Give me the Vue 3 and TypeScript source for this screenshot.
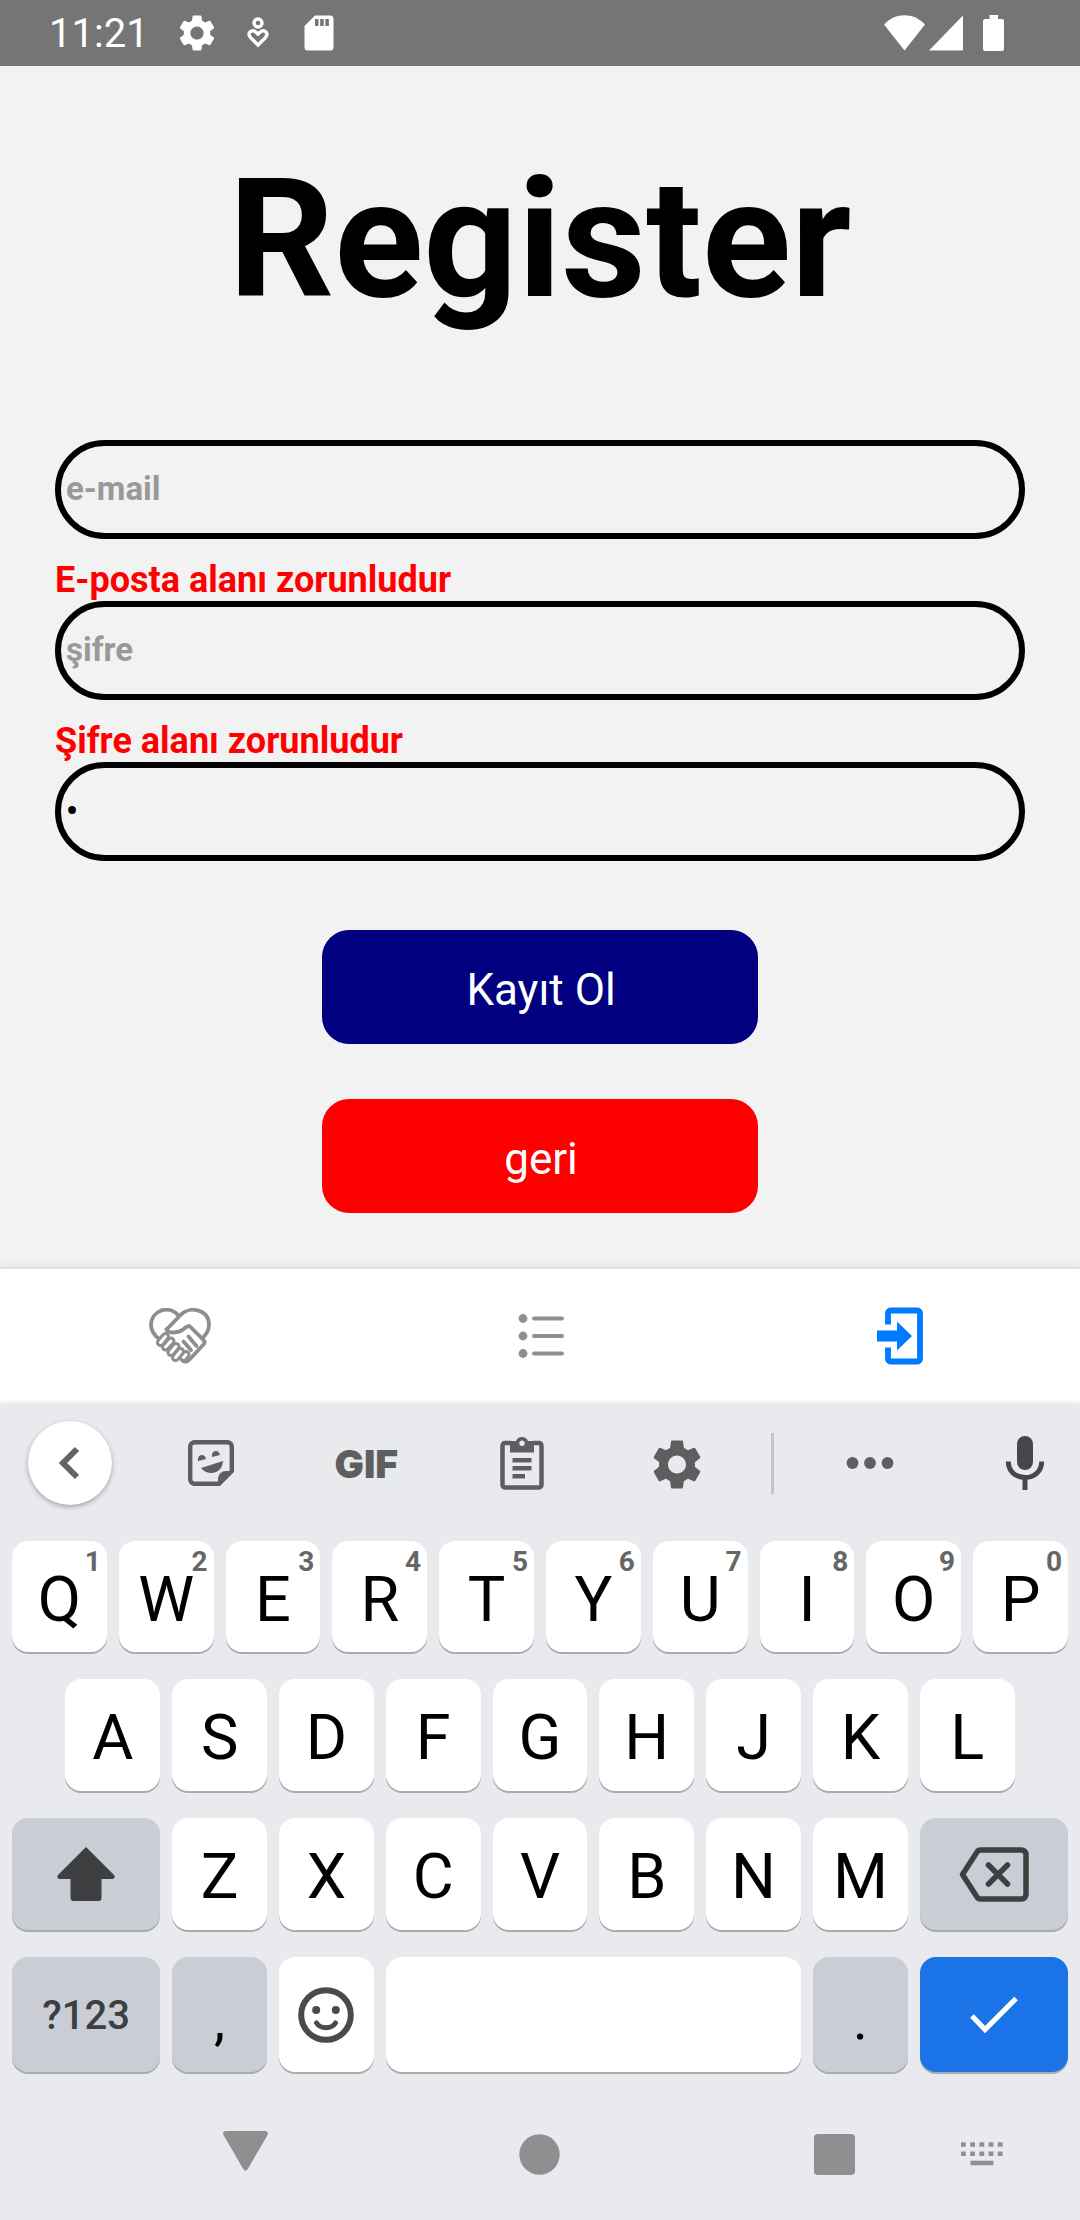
<script setup lang="ts">
import { ref } from 'vue'

interface Key {
  label: string
  hint?: string
}

const email = ref('')
const password = ref('')
const passwordAgain = ref('1')

const topRow: Key[] = [...'QWERTYUIOP'].map((label, i) => ({
  label,
  hint: String((i + 1) % 10),
}))
const homeRow: Key[] = [...'ASDFGHJKL'].map((label) => ({ label }))
const bottomRow: Key[] = [...'ZXCVBNM'].map((label) => ({ label }))

const gearPath =
  'M19.14 12.94c.04-.3.06-.61.06-.94 0-.32-.02-.64-.07-.94l2.03-1.58c.18-.14.23-.41.12-.61l-1.92-3.32c-.12-.22-.37-.29-.59-.22l-2.39.96c-.5-.38-1.03-.7-1.62-.94l-.36-2.54c-.04-.24-.24-.41-.48-.41h-3.84c-.24 0-.43.17-.47.41l-.36 2.54c-.59.24-1.13.57-1.62.94l-2.39-.96c-.22-.08-.47 0-.59.22L2.74 8.87c-.12.21-.08.47.12.61l2.03 1.58c-.05.3-.09.63-.09.94s.02.64.07.94l-2.03 1.58c-.18.14-.23.41-.12.61l1.92 3.32c.12.22.37.29.59.22l2.39-.96c.5.38 1.03.7 1.62.94l.36 2.54c.05.24.24.41.48.41h3.84c.24 0 .44-.17.47-.41l.36-2.54c.59-.24 1.13-.56 1.62-.94l2.39.96c.22.08.47 0 .59-.22l1.92-3.32c.12-.22.07-.47-.12-.61l-2.01-1.58zM12 15.6c-1.98 0-3.6-1.62-3.6-3.6s1.62-3.6 3.6-3.6 3.6 1.62 3.6 3.6-1.62 3.6-3.6 3.6z'
</script>

<template>
  <div class="phone">
    <header class="status">
      <span class="time">11:21</span>
      <div class="status-left">
        <svg width="44" height="44" viewBox="0 0 24 24" fill="currentColor"><path :d="gearPath" /></svg>
        <svg width="44" height="44" viewBox="0 0 44 44" fill="none" stroke="currentColor" stroke-width="3.4">
          <circle cx="22" cy="12" r="4" />
          <path d="M22 34 L14.6 26.6 C10.6 22 16 17.6 20 21.2 L22 23.2 L24 21.2 C28 17.6 33.4 22 29.4 26.6 Z" />
        </svg>
        <svg width="44" height="44" viewBox="0 0 44 44" fill="currentColor" fill-rule="evenodd">
          <path d="M18 4.500h15a3.500 3.500 0 0 1 3.500 3.500v28a3.500 3.500 0 0 1-3.500 3.500h-22a3.500 3.500 0 0 1-3.500-3.500V15zM18 8v7h3.500V8zM23.200 8v7h3.500V8zM28.400 8v7h3.500V8z" />
        </svg>
      </div>
      <div class="status-right">
        <svg width="41" height="36" viewBox="0 0 41 36" fill="currentColor"><path d="M20.500 35.500 0 9.500C11-3 30-3 41 9.500z" /></svg>
        <svg width="34" height="36" viewBox="0 0 34 36" fill="currentColor"><path d="M34 .500V35.500H0z" /></svg>
        <svg width="37" height="36" viewBox="0 0 37 36" fill="currentColor">
          <path d="M22.500 0h8.500v4h4a2 2 0 0 1 2 2v28a2 2 0 0 1-2 2H18a2 2 0 0 1-2-2V6a2 2 0 0 1 2-2h4.500z" />
        </svg>
      </div>
    </header>

    <main class="screen">
      <h1>Register</h1>
      <form @submit.prevent>
        <input v-model="email" class="field" type="email" placeholder="e-mail" aria-label="e-mail" aria-describedby="email-error" />
        <p id="email-error" class="error">E-posta alanı zorunludur</p>
        <input v-model="password" class="field" type="password" placeholder="şifre" aria-label="şifre" aria-describedby="password-error" />
        <p id="password-error" class="error">Şifre alanı zorunludur</p>
        <input v-model="passwordAgain" class="field" type="password" aria-label="şifre tekrar" />
        <div class="actions">
          <button class="action submit" type="submit">Kayıt Ol</button>
          <button class="action back" type="button">geri</button>
        </div>
      </form>
    </main>

    <nav class="tabs">
      <a href="#help" aria-label="Yardım">
        <svg width="62" height="56" viewBox="0 0 62 56" fill="none" stroke="currentColor" stroke-width="3.800" stroke-linecap="round" stroke-linejoin="round">
          <path d="M29.500 7.500C19-4 2 3 2 17c0 5 3 10 8 14" />
          <path d="M17.500 21.500 32 6.500C41-2 60 1 60 17c0 5-2.500 9-6 12.500" />
          <path d="M17.500 21.500c2 4.500 12 3.500 16.500 0 2.500-2 4-3.500 6.500-3.500l14 14c1.500 1.500 1.500 3 0 4.500L41 51c-2 3-5 3.500-7.500 1.500" />
          <g stroke-width="9">
            <path d="M16.500 28.500 11.500 34.500" /><path d="M22 33 16.500 39" /><path d="M27 38.500 22 44.500" /><path d="M31.500 43.500 26.500 49.500" /><path d="M37 46.500 34.500 49.500" />
          </g>
          <g stroke="#fff" stroke-width="3">
            <path d="M16.500 28.500 11.500 34.500" /><path d="M22 33 16.500 39" /><path d="M27 38.500 22 44.500" /><path d="M31.500 43.500 26.500 49.500" /><path d="M37 46.500 34.500 49.500" />
          </g>
          <path d="M34.500 33.500 42 42M39.500 28.500 47.500 38" />
        </svg>
      </a>
      <a href="#list" aria-label="Liste">
        <svg width="48" height="44" viewBox="0 0 48 44" fill="currentColor">
          <circle cx="7" cy="4.500" r="4.400" /><circle cx="7" cy="22" r="4.400" /><circle cx="7" cy="39.500" r="4.400" />
          <path d="M18 4.500h28M18 22h28M18 39.500h28" stroke="currentColor" stroke-width="4" stroke-linecap="round" />
        </svg>
      </a>
      <a href="#login" class="active" aria-label="Giriş">
        <svg width="46" height="58" viewBox="0 0 46 58" fill="currentColor">
          <path d="M11 17.500V6A2.500 2.500 0 0 1 13.500 3.500H40.500A2.500 2.500 0 0 1 43 6V52A2.500 2.500 0 0 1 40.500 54.500H13.500A2.500 2.500 0 0 1 11 52V40.500" fill="none" stroke="currentColor" stroke-width="5.800" />
          <path d="M0 23.500H20V14.500L35 29 20 43.500V34.500H0z" />
        </svg>
      </a>
    </nav>

    <section class="keyboard">
      <div class="tools">
        <button class="tool collapse" type="button" aria-label="Geri">
          <svg width="84" height="84" viewBox="0 0 84 84" fill="none" stroke="#636466" stroke-width="6"><path d="M49 28 35 42 49 56" /></svg>
        </button>
        <div class="tool-group">
          <button class="tool" type="button" aria-label="Çıkartma">
            <svg width="46" height="46" viewBox="0 0 46 46" fill="currentColor">
              <path d="M31 43.800H6.500A4.300 4.300 0 0 1 2.200 39.500V6.500A4.300 4.300 0 0 1 6.500 2.200h33A4.300 4.300 0 0 1 43.800 6.500V31z" fill="none" stroke="currentColor" stroke-width="4.400" />
              <path d="M30 45V39a8 8 0 0 1 8-8h7L32 45z" />
              <path d="M13 28 35 21C34 35 19 36 13 28zM10 21c-1-7 7-8 8-2zM24 17c-1-7 7-8 8-2z" />
            </svg>
          </button>
          <button class="tool gif" type="button">GIF</button>
          <button class="tool" type="button" aria-label="Pano">
            <svg width="44" height="54" viewBox="0 0 44 54" fill="currentColor">
              <path d="M11 7H5A3 3 0 0 0 2.500 10V49A2.500 2.500 0 0 0 5 51.500H39A2.500 2.500 0 0 0 41.500 49V10A3 3 0 0 0 39 7H33" fill="none" stroke="currentColor" stroke-width="4.500" />
              <path fill-rule="evenodd" d="M10 5h6a6.500 6.500 0 0 1 12 0h6v11.500H10zM22 4.500a2.700 2.700 0 1 0 0 5.400 2.700 2.700 0 0 0 0-5.400z" />
              <path d="M12.500 22h19v4.500h-19zM12.500 30h19v4.500h-19zM12.500 38H25v4.500H12.500z" />
            </svg>
          </button>
          <button class="tool" type="button" aria-label="Ayarlar">
            <svg width="60" height="60" viewBox="0 -0.6 24 24" fill="currentColor"><path :d="gearPath" /></svg>
          </button>
        </div>
        <span class="divider"></span>
        <button class="tool more" type="button" aria-label="Diğer">
          <svg width="48" height="14" viewBox="0 0 48 14" fill="currentColor"><circle cx="6.500" cy="7" r="5.900" /><circle cx="24" cy="7" r="5.900" /><circle cx="41.500" cy="7" r="5.900" /></svg>
        </button>
        <button class="tool mic" type="button" aria-label="Sesle yazma">
          <svg width="40" height="54" viewBox="0 0 40 54" fill="currentColor">
            <rect x="12" y="0" width="16" height="34" rx="8" />
            <path d="M3.300 25.500c0 10 7.500 16 16.700 16s16.700-6 16.700-16M20 41v13" fill="none" stroke="currentColor" stroke-width="5" />
          </svg>
        </button>
      </div>

      <div class="keys">
        <button v-for="key in topRow" :key="key.label" class="key" type="button">
          {{ key.label }}<span class="hint">{{ key.hint }}</span>
        </button>

        <button v-for="key in homeRow" :key="key.label" class="key home" type="button">{{ key.label }}</button>

        <button class="key wide shade row-start" type="button" aria-label="Shift">
          <svg width="58" height="54" viewBox="0 0 58 54" fill="#3e3f41"><path d="M29 0 57 28c1.500 2 .500 4-2 4H44.500V51a3 3 0 0 1-3 3h-25a3 3 0 0 1-3-3V32H3c-2.500 0-3.500-2-2-4z" /></svg>
        </button>
        <button v-for="key in bottomRow" :key="key.label" class="key" type="button">{{ key.label }}</button>
        <button class="key wide shade" type="button" aria-label="Sil">
          <svg width="70" height="55" viewBox="0 0 70 55" fill="none" stroke="#3e3f41" stroke-width="5.500" stroke-linejoin="round">
            <path d="M3.500 27.500 18 5Q19.300 3 21.500 3H62.500A4.500 4.500 0 0 1 67 7.500V47.500A4.500 4.500 0 0 1 62.500 52H21.500Q19.300 52 18 50z" />
            <path d="M29.500 18 48.500 37M48.500 18 29.500 37" stroke-linecap="round" />
          </svg>
        </button>

        <button class="key wide shade symbols" type="button">?123</button>
        <button class="key shade mark" type="button">,</button>
        <button class="key" type="button" aria-label="Emoji">
          <svg width="56" height="56" viewBox="0 0 56 56" fill="#4a4a4b">
            <circle cx="28" cy="28" r="24.800" fill="none" stroke="#4a4a4b" stroke-width="6" />
            <circle cx="18.200" cy="23" r="4" /><circle cx="37.800" cy="23" r="4" />
            <path d="M18.500 36c4 6.200 15 6.200 19 0" fill="none" stroke="#4a4a4b" stroke-width="5" stroke-linecap="round" />
          </svg>
        </button>
        <button class="key space" type="button" aria-label="Boşluk"></button>
        <button class="key shade mark" type="button">.</button>
        <button class="key wide enter" type="button" aria-label="Tamam">
          <svg width="48" height="38" viewBox="0 0 48 38" fill="none" stroke="#fff" stroke-width="5.200"><path d="M2 20 15 33.500 46 2.500" /></svg>
        </button>
      </div>

      <nav class="system">
        <button class="sys-back" type="button" aria-label="Klavyeyi kapat">
          <svg width="45" height="46" viewBox="0 0 45 46" fill="currentColor"><path d="M3 0H42c2.500 0 3.500 2 2.500 4L24.500 38.500c-1 1.500-3 1.500-4 0L.500 4C-.500 2 .500 0 3 0z" /></svg>
        </button>
        <button class="sys-home" type="button" aria-label="Ana ekran">
          <svg width="41" height="41" viewBox="0 0 41 41" fill="currentColor"><circle cx="20.500" cy="20.500" r="20.200" /></svg>
        </button>
        <button class="sys-recent" type="button" aria-label="Son uygulamalar">
          <svg width="41" height="41" viewBox="0 0 41 41" fill="currentColor"><rect width="41" height="41" rx="4" /></svg>
        </button>
        <button class="sys-ime" type="button" aria-label="Klavye seç">
          <svg width="42" height="24" viewBox="0 0 42 24" fill="none" stroke="currentColor" stroke-width="4.600">
            <path d="M0 2.500h42M0 11.800h42" stroke-dasharray="4.800 4.400" />
            <path d="M9.500 21H32.500" />
          </svg>
        </button>
      </nav>
    </section>
  </div>
</template>

<style>
body {
  background: #f2f2f2;
}
</style>

<style scoped>
.phone {
  display: flex;
  flex-direction: column;
  min-height: 100vh;
  background: #f2f2f2;
  color: #000;
  font-family: Roboto, 'Liberation Sans', sans-serif;
}

button {
  margin: 0;
  padding: 0;
  border: 0;
  background: none;
  color: inherit;
  font: inherit;
}

svg {
  display: block;
  flex: none;
}

.status {
  display: flex;
  align-items: center;
  height: 66px;
  padding: 0 76px 0 49px;
  background: #757575;
  color: #fff;
}

.time {
  padding-top: 2px;
  font-size: 40px;
  line-height: 48px;
}

.status-left {
  display: flex;
  gap: 17px;
  margin-left: 26px;
}

.status-right {
  display: flex;
  gap: 4px;
  margin-left: auto;
}

.screen {
  flex: 1;
  padding: 77px 55px 54px;
}

h1 {
  margin: 0 0 103px;
  font-size: 165px;
  line-height: 194px;
  font-weight: 700;
  text-align: center;
}

.field {
  display: block;
  box-sizing: border-box;
  width: 100%;
  height: 99px;
  padding: 0 5px 2px;
  border: 6px solid #000;
  border-radius: 50px;
  outline: 0;
  background: transparent;
  color: #000;
  font-family: inherit;
  font-size: 33px;
  font-weight: 700;
}

.field::placeholder {
  color: #999;
  opacity: 1;
}

.error {
  margin: 20px 0 0;
  color: #f00;
  font-size: 36px;
  line-height: 42px;
  font-weight: 700;
}

.actions {
  display: flex;
  flex-direction: column;
  align-items: center;
  gap: 55px;
  margin-top: 69px;
}

.action {
  width: 45%;
  height: 114px;
  padding: 6px 0 0 2px;
  border-radius: 27px;
  color: #fff;
  font-size: 44px;
}

.submit {
  background: #000080;
}

.back {
  background: #f00;
}

.tabs {
  display: grid;
  grid-template-columns: repeat(3, 1fr);
  height: 134px;
  border-top: 2px solid #dfdfdf;
  background: #fff;
  box-shadow: 0 -2px 8px rgba(0, 0, 0, 0.06);
}

.tabs a {
  display: flex;
  align-items: center;
  justify-content: center;
  color: #8e8e8f;
}

.tabs .active {
  color: #007aff;
}

.keyboard {
  background: #e8eaed;
  box-shadow: 0 -1px 5px rgba(0, 0, 0, 0.08);
}

.tools {
  display: flex;
  align-items: center;
  height: 120px;
  padding: 0 35px 0 28px;
  color: #5d5e60;
}

.tool {
  display: flex;
  align-items: center;
  justify-content: center;
}

.collapse {
  border-radius: 50%;
  background: #fff;
  box-shadow: 0 2px 5px rgba(0, 0, 0, 0.3);
}

.tool-group {
  display: grid;
  flex: 1;
  grid-template-columns: repeat(4, 1fr);
  margin: 0 16px 0 21px;
}

.gif {
  font-family: Inter, Roboto, sans-serif;
  font-size: 39px;
  font-weight: 900;
}

.divider {
  width: 3px;
  height: 61px;
  background: #c4c5c9;
}

.more {
  margin-left: 72px;
}

.mic {
  margin-left: 111px;
  color: #464749;
}

.keys {
  display: grid;
  grid-template-columns: repeat(20, 1fr);
  grid-template-rows: 111px 112px 112px 115px;
  gap: 27px 12px;
  padding: 18px 12px 16px;
}

.key {
  position: relative;
  display: flex;
  grid-column: span 2;
  align-items: center;
  justify-content: center;
  border-radius: 16px;
  background: #fff;
  box-shadow: 0 2px 0 #a9abae;
  color: #000;
  font-size: 63px;
  line-height: 64px;
}

.key:not(:has(svg)) {
  padding-top: 6px;
}

.hint {
  position: absolute;
  top: 7px;
  right: 6px;
  color: #666;
  font-size: 28px;
  line-height: 28px;
  font-weight: 700;
}

.home:nth-of-type(11) {
  grid-column: 2 / span 2;
}

.wide {
  grid-column: span 3;
}

.row-start {
  grid-column: 1 / span 3;
}

.space {
  grid-column: span 8;
}

.shade {
  background: #cbcdd6;
}

.key.symbols {
  padding-top: 2px;
  color: #3e3f41;
  font-size: 40px;
  font-weight: 500;
}

.key.mark {
  padding-top: 10px;
  font-size: 56px;
}

.enter {
  background: #1b73e8;
}

.system {
  display: grid;
  grid-template-columns: repeat(11, 1fr);
  align-items: center;
  justify-items: center;
  height: 132px;
  color: #8e8f91;
}

.system button {
  grid-row: 1;
}

.sys-back {
  grid-column: 2 / span 3;
}

.sys-home {
  grid-column: 5 / span 3;
}

.sys-recent {
  grid-column: 8 / span 3;
}

.sys-ime {
  grid-column: 10 / span 2;
}
</style>
